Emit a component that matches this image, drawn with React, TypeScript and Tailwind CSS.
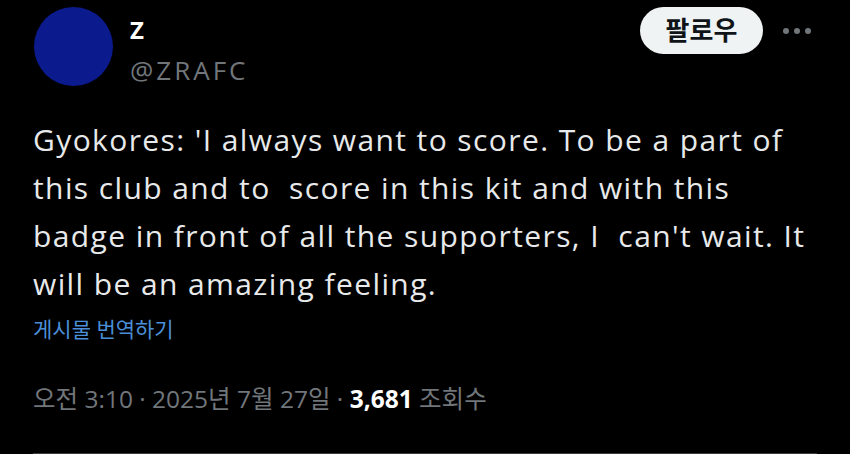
const font = { fontFamily: "'Open Sans', 'Noto Sans CJK KR', sans-serif" };

export default function App() {
  return (
    <div className="w-[850px] h-[454px] bg-black overflow-hidden" style={font}>
      <div className="mx-[33px] h-full flex flex-col border-b border-[#3a3d40]">
        {/* header */}
        <div className="flex items-start pt-[7px] h-[116px]">
          <div className="w-[79px] h-[79px] rounded-full bg-[#0b1a8c] shrink-0 ml-[1px]" />
          <div className="ml-[17px] flex flex-col">
            <span className="text-white font-bold text-[24px] leading-[32px] mt-[7px]">Z</span>
            <span className="text-[#71767b] text-[26px] leading-[34px] mt-[7px] tracking-[3px]">@ZRAFC</span>
          </div>
          <div className="ml-auto flex items-center gap-[20px] mr-[6px]">
            <button className="h-[47px] w-[123px] rounded-full bg-[#eff3f4] text-[#0f1419] font-bold text-[26px] flex items-center justify-center">
              팔로우
            </button>
            <div className="flex items-center gap-[5px]">
              <span className="w-[6px] h-[6px] rounded-full bg-[#71767b]" />
              <span className="w-[6px] h-[6px] rounded-full bg-[#71767b]" />
              <span className="w-[6px] h-[6px] rounded-full bg-[#71767b]" />
            </div>
          </div>
        </div>

        {/* body */}
        <p className="text-[#e7e9ea] text-[30px] leading-[48px] tracking-[1.4px] whitespace-nowrap">
          Gyokores: 'I always want to score. To be a part of
          <br />
          this club and to&nbsp; score in this kit and with this
          <br />
          badge in front of all the supporters, I&nbsp; can't wait. It
          <br />
          will be an amazing feeling.
        </p>
        <div className="text-[#4a8fd8] text-[21px] leading-[30px] mt-[6px]">게시물 번역하기</div>

        {/* meta */}
        <div className="text-[#71767b] text-[24.5px] leading-[32px] mt-[39px] flex items-center whitespace-pre">
          <span>오전 3:10 · 2025년 7월 27일 · </span>
          <span className="text-white font-bold">3,681</span>
          <span> 조회수</span>
        </div>
      </div>
    </div>
  );
}
